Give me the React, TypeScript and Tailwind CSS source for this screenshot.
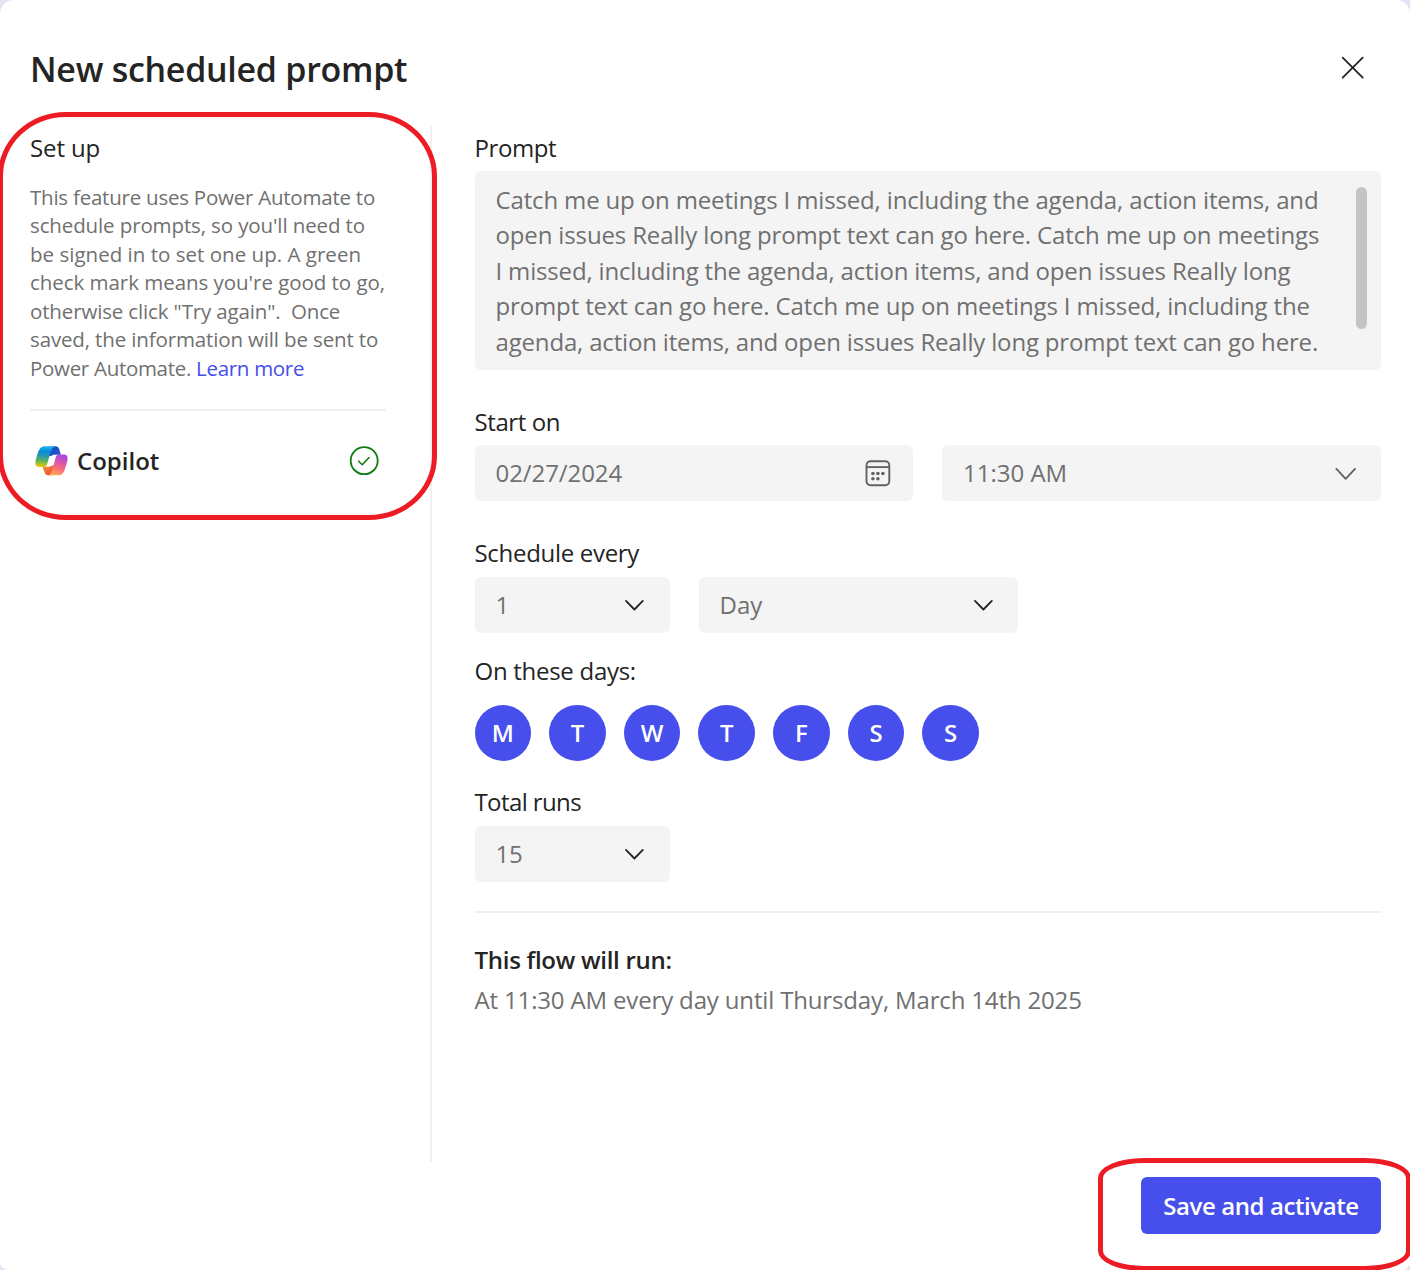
import type { ReactNode } from "react";

const descriptionLines = [
  { text: "This feature uses Power Automate to", spacing: "tracking-[-0.23px]" },
  { text: "schedule prompts, so you'll need to", spacing: "tracking-[-0.12px]" },
  { text: "be signed in to set one up. A green", spacing: "tracking-[0.02px]" },
  { text: "check mark means you're good to go,", spacing: "tracking-[-0.04px]" },
  { text: 'otherwise click "Try again".  Once', spacing: "tracking-[-0.14px]" },
  { text: "saved, the information will be sent to", spacing: "tracking-[-0.14px]" },
];

const promptLines = [
  { text: "Catch me up on meetings I missed, including the agenda, action items, and", spacing: "tracking-[-0.15px]" },
  { text: "open issues Really long prompt text can go here. Catch me up on meetings", spacing: "tracking-[-0.138px]" },
  { text: "I missed, including the agenda, action items, and open issues Really long", spacing: "tracking-[-0.168px]" },
  { text: "prompt text can go here. Catch me up on meetings I missed, including the", spacing: "tracking-[-0.138px]" },
  { text: "agenda, action items, and open issues Really long prompt text can go here.", spacing: "tracking-[-0.17px]" },
];

const days = ["M", "T", "W", "T", "F", "S", "S"];

function CopilotLogo() {
  return (
    <svg width="33" height="30" viewBox="0 0 33 30" fill="none">
      <defs>
        <linearGradient id="cpLeft" x1="9" y1="0" x2="7" y2="21" gradientUnits="userSpaceOnUse">
          <stop stopColor="#20b5f2" />
          <stop offset="0.25" stopColor="#078ad9" />
          <stop offset="0.5" stopColor="#2c9ba4" />
          <stop offset="0.75" stopColor="#6db94b" />
          <stop offset="1" stopColor="#f8c800" />
        </linearGradient>
        <linearGradient id="cpRight" x1="27" y1="9" x2="20" y2="30" gradientUnits="userSpaceOnUse">
          <stop stopColor="#a548e4" />
          <stop offset="0.35" stopColor="#dc56aa" />
          <stop offset="0.65" stopColor="#fb6c79" />
          <stop offset="1" stopColor="#ffb153" />
        </linearGradient>
        <linearGradient id="cpTop" x1="25" y1="8" x2="16" y2="1" gradientUnits="userSpaceOnUse">
          <stop stopColor="#2b5ed7" />
          <stop offset="0.6" stopColor="#1b4acb" />
          <stop offset="1" stopColor="#1377d4" />
        </linearGradient>
        <linearGradient id="cpBottom" x1="9" y1="20" x2="16" y2="29" gradientUnits="userSpaceOnUse">
          <stop stopColor="#f58f38" />
          <stop offset="1" stopColor="#e84f32" />
        </linearGradient>
      </defs>
      <path d="M15 .2h5.300c2.300 0 3.300 1 4 3.100l1.600 5.400h-5.400c-2.300 0-3.500.3-4.300 1.300L14 10z" fill="url(#cpTop)" />
      <path d="M17.900 29.300h-4.400c-2.300 0-3.400-1-4.100-3.200L7.500 20.800h5c2.300 0 3.500-.3 4.300-1.300l2.100 0z" fill="url(#cpBottom)" />
      <path d="M20 .2H10C6 .2 4.400 2.700 3 6.600 1.500 11 .3 14.700.3 17.300c0 2.700 1.500 3.700 4 3.700h4.300c2.200 0 3.100-1.200 3.800-3.700l3.500-12C16.700 2.400 17.600.8 20 .2z" fill="url(#cpLeft)" />
      <path d="M12.900 29.300h10c4 0 5.600-2.500 7-6.400 1.500-4.400 2.700-8.100 2.700-10.700 0-2.700-1.500-3.700-4-3.700h-4.300c-2.200 0-3.100 1.200-3.800 3.700l-3.500 12c-.8 2.900-1.700 4.500-4.100 5.100z" fill="url(#cpRight)" />
    </svg>
  );
}

function CheckCircle() {
  return (
    <svg width="30" height="30" viewBox="0 0 30 30" fill="none" stroke="#107c10" strokeLinecap="round" strokeLinejoin="round">
      <circle cx="15.200" cy="14.700" r="13.500" strokeWidth="1.800" />
      <path d="m9.700 15.200 3.500 3.500 6.900-7.200" strokeWidth="1.600" />
    </svg>
  );
}

function CalendarIcon() {
  return (
    <svg width="26" height="28" viewBox="0 0 26 28" fill="none" stroke="#616161" strokeWidth="1.900">
      <rect x="1.500" y="2.200" width="22.800" height="24" rx="4" />
      <path d="M1.500 8.100h22.800" />
      <g fill="#616161" stroke="none">
        <circle cx="7.900" cy="14.500" r="1.800" />
        <circle cx="12.900" cy="14.500" r="1.800" />
        <circle cx="17.900" cy="14.500" r="1.800" />
        <circle cx="7.900" cy="19.700" r="1.800" />
        <circle cx="12.900" cy="19.700" r="1.800" />
      </g>
    </svg>
  );
}

function Chevron({ wide = false }: { wide?: boolean }) {
  return wide ? (
    <svg width="22" height="14" viewBox="0 0 22 14" fill="none" stroke="#616161" strokeWidth="1.800" strokeLinecap="round" strokeLinejoin="round">
      <path d="m1.400 2.900 9.300 10 9.300-10" />
    </svg>
  ) : (
    <svg width="20" height="12" viewBox="0 0 20 12" fill="none" stroke="#242424" strokeWidth="1.800" strokeLinecap="round" strokeLinejoin="round">
      <path d="m2 1.900 8.400 8.600 8.400-8.600" />
    </svg>
  );
}

function Field({ value, icon, className }: { value: string; icon: ReactNode; className: string }) {
  return (
    <div className={"flex h-14 items-center justify-between rounded-[6px] bg-[#f4f4f4] pl-[21px] text-[#707070] " + className}>
      <span>{value}</span>
      {icon}
    </div>
  );
}

function Label({ children, className = "" }: { children: ReactNode; className?: string }) {
  return <div className={"h-8 leading-8 text-[#242424] " + className}>{children}</div>;
}

export default function App() {
  return (
    <div className="relative h-[1270px] w-[1410px] overflow-hidden bg-[#e4e3f4] font-['Open_Sans',sans-serif] text-[24px] whitespace-pre">
      <div className="flex h-full flex-col rounded-t-[14px] rounded-b-[8px] bg-white">
        <header className="flex h-[125px] shrink-0 items-start justify-between pr-[46px] pl-[30px]">
          <h1 className="mt-[46px] text-[34px] leading-[47px] font-semibold tracking-[-0.28px] text-[#242424]">New scheduled prompt</h1>
          <button aria-label="Close" className="mt-[56px]">
            <svg width="23" height="23" viewBox="0 0 23 23" fill="none" stroke="#242424" strokeWidth="1.800" strokeLinecap="round">
              <path d="m1.700 1.700 20 20M21.700 1.700l-20 20" />
            </svg>
          </button>
        </header>

        <div className="flex h-[1037px] shrink-0">
          <aside className="w-[432px] border-r-2 border-[#f0f0f0] pr-11 pl-[30px]">
            <Label className="pt-[7px] tracking-[-0.12px]">Set up</Label>
            <div className="mt-[26px] text-[20.5px] leading-[28.450px] text-[#707070]">
              {descriptionLines.map((line) => (
                <div key={line.text} className={line.spacing}>{line.text}</div>
              ))}
              <div className="tracking-[-0.3px]">
                Power Automate. <a className="text-[#464feb]">Learn more</a>
              </div>
            </div>
            <div className="mt-[27px] h-[2px] bg-[#f0f0f0]" />
            <div className="mt-[34px] flex h-8 items-center pr-[7px] pl-[5px]">
              <CopilotLogo />
              <span className="ml-[9px] grow font-semibold text-[#242424]">Copilot</span>
              <CheckCircle />
            </div>
          </aside>

          <main className="flex w-[950px] flex-col pt-[7px] pl-[42.500px]">
            <Label className="tracking-[-0.4px]">Prompt</Label>
            <div className="mt-[7px] flex h-[199px] w-[906.500px] shrink-0 justify-between rounded-[6px] bg-[#f4f4f4] pt-[10.600px] pr-[14px] pl-[21px] text-[#707070]">
              <div className="leading-[35.550px]">
                {promptLines.map((line) => (
                  <div key={line.text} className={line.spacing}>{line.text}</div>
                ))}
              </div>
              <div className="mt-[5.400px] h-[142px] w-[11px] rounded-full bg-[#c4c4c4]" />
            </div>

            <Label className="mt-9 tracking-[-0.4px]">Start on</Label>
            <div className="mt-[7px] flex gap-[29px]">
              <Field value="02/27/2024" className="w-[438.500px] pr-[22px] tracking-[-0.08px]" icon={<CalendarIcon />} />
              <Field value="11:30 AM" className="w-[438.500px] pr-6" icon={<Chevron wide />} />
            </div>

            <Label className="mt-9 tracking-[-0.3px]">Schedule every</Label>
            <div className="mt-[8px] flex gap-[29px]">
              <Field value="1" className="w-[195px] pr-[26px]" icon={<Chevron />} />
              <Field value="Day" className="w-[319px] pr-[25px]" icon={<Chevron />} />
            </div>

            <Label className="mt-[22px] tracking-[-0.28px]">On these days:</Label>
            <div className="mt-[17.500px] flex gap-[18.170px]">
              {days.map((day, i) => (
                <div key={i} className="flex size-[56.500px] items-center justify-center rounded-full bg-[#464feb] font-semibold text-white">
                  {day}
                </div>
              ))}
            </div>

            <Label className="mt-[25px] tracking-[-0.6px]">Total runs</Label>
            <Field value="15" className="mt-2 w-[195px] pr-[26px] tracking-[-0.3px]" icon={<Chevron />} />

            <div className="mt-[28.500px] h-[2px] w-[907px] shrink-0 bg-[#f0f0f0]" />
            <div className="mt-[31px] leading-8 font-semibold tracking-[-0.28px] text-[#242424]">This flow will run:</div>
            <div className="mt-2 leading-8 tracking-[-0.155px] text-[#707070]">At 11:30 AM every day until Thursday, March 14th 2025</div>
          </main>
        </div>

        <footer className="flex justify-end pt-[15px] pr-[29px]">
          <button className="h-[57px] w-60 rounded-[6px] bg-[#464feb] font-semibold tracking-[-0.4px] text-white">Save and activate</button>
        </footer>
      </div>

      <div className="pointer-events-none absolute top-[112px] left-[-2px] h-[408px] w-[439px] rounded-[68px/64px] border-[5px] border-[#ed1c24]" />
      <div className="pointer-events-none absolute top-[1158px] left-[1098px] h-[113px] w-[313px] rounded-[46px/20px] border-[5px] border-[#ed1c24]" />
    </div>
  );
}
